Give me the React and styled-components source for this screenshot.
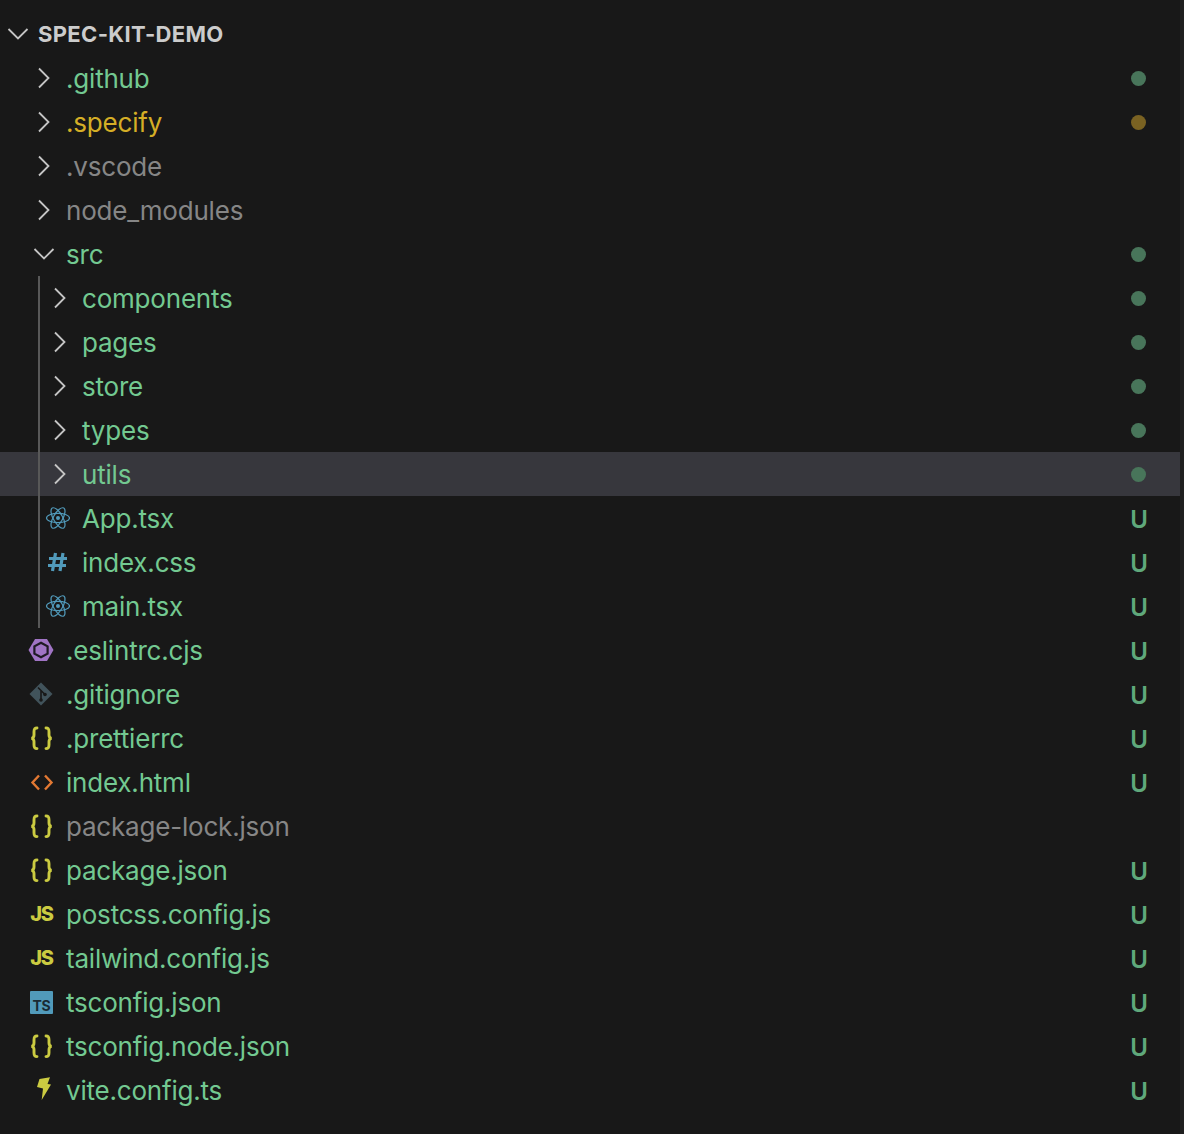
import React from "react";
import styled, { createGlobalStyle } from "styled-components";

const GREEN = "#73c991";
const YELLOW = "#d5ae26";
const GRAY = "#868686";

const GlobalStyle = createGlobalStyle`
  html, body {
    margin: 0;
    padding: 0;
    background: #181818;
  }
  body {
    font-family: Inter, "Liberation Sans", sans-serif;
  }
`;

const Explorer = styled.div`
  display: flex;
  width: 1184px;
  height: 1134px;
  overflow: hidden;
  background: #181818;
`;

const Tree = styled.div`
  flex: 1;
  padding-top: 12px;
`;

const Scrollbar = styled.div`
  width: 4px;
  background: #1f1f1f;
`;

const Header = styled.div`
  display: flex;
  align-items: center;
  height: 44px;
  font-size: 22px;
  font-weight: 700;
  letter-spacing: 0.35px;
  color: #cccccc;
`;

const HeaderChevron = styled.span`
  display: flex;
  justify-content: center;
  width: 36px;
  margin-right: 2px;
`;

const Group = styled.div`
  position: relative;

  &::before {
    content: "";
    position: absolute;
    left: 38px;
    top: 0;
    bottom: 0;
    width: 2px;
    background: #585858;
    z-index: 1;
  }
`;

const Row = styled.div`
  display: flex;
  align-items: center;
  height: 44px;
  padding-left: ${(p) => 28 + p.$depth * 16}px;
  padding-right: 26px;
  background: ${(p) => (p.$active ? "#37373d" : "transparent")};
`;

const IconSlot = styled.span`
  display: flex;
  align-items: center;
  justify-content: center;
  width: 26px;
  height: 26px;
  margin-right: 12px;
  flex: none;
`;

const ChevronSvg = styled.svg`
  flex: none;
  width: 24px;
  height: 24px;
  fill: none;
  stroke: #c5c5c5;
  stroke-width: 1.8;

  ${IconSlot} & {
    margin-left: 6px;
  }
`;

const Name = styled.span`
  padding-top: 2px;
  font-size: 26px;
  font-weight: 430;
  letter-spacing: -0.2px;
  line-height: 44px;
  color: ${(p) => p.$color};
  white-space: nowrap;
`;

const StatusSlot = styled.span`
  display: flex;
  align-items: center;
  justify-content: center;
  width: 30px;
  margin-left: auto;
`;

const Dot = styled.span`
  width: 15px;
  height: 15px;
  margin-right: 1px;
  border-radius: 50%;
  background: ${(p) => (p.$yellow ? "#7a6222" : "#48755a")};
`;

const Untracked = styled.span`
  padding-top: 3px;
  font-size: 24px;
  font-weight: 600;
  line-height: 44px;
  color: #5fa87b;
`;

const JsBadge = styled.span`
  margin-left: 1px;
  font-size: 20px;
  font-weight: 800;
  letter-spacing: -1.2px;
  line-height: 26px;
  color: #cbcb41;
`;

const TsBadge = styled.span`
  display: flex;
  align-items: flex-end;
  justify-content: flex-end;
  width: 23px;
  height: 23px;
  padding: 0 2px 1px 0;
  box-sizing: border-box;
  border-radius: 1px;
  background: #519aba;

  span {
    font-size: 14px;
    font-weight: 700;
    line-height: 14px;
    letter-spacing: -0.3px;
    color: #1a2a33;
  }
`;

const Chevron = ({ open }) => (
  <ChevronSvg viewBox="0 0 24 24">
    {open ? (
      <path d="M2.5 7 L12 16.5 L21.5 7" />
    ) : (
      <path d="M7 2.5 L16.5 12 L7 21.5" />
    )}
  </ChevronSvg>
);

const ReactIcon = () => (
  <svg width="26" height="26" viewBox="-1 0 26 26" fill="none" stroke="#519aba" strokeWidth="1.2">
    <ellipse cx="13" cy="13" rx="11.5" ry="4.6" />
    <ellipse cx="13" cy="13" rx="11.5" ry="4.6" transform="rotate(60 13 13)" />
    <ellipse cx="13" cy="13" rx="11.5" ry="4.6" transform="rotate(120 13 13)" />
    <circle cx="13" cy="13" r="2" fill="#519aba" stroke="none" />
  </svg>
);

const HashIcon = () => (
  <svg width="26" height="26" viewBox="-1 0 26 26" fill="none" stroke="#519aba" strokeWidth="3.2">
    <path d="M10.5 4 L7.5 22 M18 4 L15 22 M4 9.5 H22 M3 16.5 H21" />
  </svg>
);

const EslintIcon = () => (
  <svg width="26" height="26" viewBox="0 0 26 26">
    <path d="M7 2 H19 L25.5 13 L19 24 H7 L0.5 13 Z" fill="#a074c4" />
    <path d="M13 5.8 L19.6 9.4 V16.6 L13 20.2 L6.4 16.6 V9.4 Z" fill="#a074c4" stroke="#1f1a24" strokeWidth="2.2" />
  </svg>
);

const GitIcon = () => (
  <svg width="26" height="26" viewBox="0 0 26 26">
    <path d="M13 1.5 L24.5 13 L13 24.5 L1.5 13 Z" fill="#41535b" strokeLinejoin="round" />
    <path d="M10 6.5 L17 13.5 M13 10 V19" stroke="#181818" strokeWidth="1.6" fill="none" />
    <circle cx="13" cy="19" r="1.8" fill="#181818" />
    <circle cx="17" cy="13.5" r="1.8" fill="#181818" />
  </svg>
);

const BracesIcon = () => (
  <svg width="26" height="26" viewBox="0 0 26 26" fill="none" stroke="#cbcb41" strokeWidth="2.9" strokeLinecap="round">
    <path d="M9 3 C6.5 3 6 4.2 6 6.8 V10 C6 12 5 13 3.5 13.3 C5 13.6 6 14.5 6 16.5 V19.8 C6 22.4 6.5 23.6 9 23.6" />
    <path d="M18 3 C20.5 3 21 4.2 21 6.8 V10 C21 12 22 13 23.5 13.3 C22 13.6 21 14.5 21 16.5 V19.8 C21 22.4 20.5 23.6 18 23.6" />
  </svg>
);

const HtmlIcon = () => (
  <svg width="26" height="26" viewBox="0 0 26 26" fill="none" stroke="#e37933" strokeWidth="2.4">
    <path d="M11 6.5 L4.5 13.5 L11 20.5 M17 6.5 L23.5 13.5 L17 20.5" />
  </svg>
);

const BoltIcon = () => (
  <svg width="26" height="26" viewBox="0 0 26 26">
    <path d="M11.5 2 L22 0.3 L19.5 7 L23 7.5 L13.7 23 L15 11.5 L9 10 Z" fill="#cbcb41" />
  </svg>
);

const ICONS = {
  react: <ReactIcon />,
  hash: <HashIcon />,
  eslint: <EslintIcon />,
  git: <GitIcon />,
  json: <BracesIcon />,
  html: <HtmlIcon />,
  js: <JsBadge>JS</JsBadge>,
  ts: (
    <TsBadge>
      <span>TS</span>
    </TsBadge>
  ),
  vite: <BoltIcon />,
};

const folders = [
  { name: ".github", color: GREEN, status: "dot" },
  { name: ".specify", color: YELLOW, status: "dotYellow" },
  { name: ".vscode", color: GRAY },
  { name: "node_modules", color: GRAY },
];

const srcFolders = ["components", "pages", "store", "types", "utils"];
const srcFiles = [
  { name: "App.tsx", icon: "react" },
  { name: "index.css", icon: "hash" },
  { name: "main.tsx", icon: "react" },
];

const rootFiles = [
  { name: ".eslintrc.cjs", icon: "eslint" },
  { name: ".gitignore", icon: "git" },
  { name: ".prettierrc", icon: "json" },
  { name: "index.html", icon: "html" },
  { name: "package-lock.json", icon: "json", ignored: true },
  { name: "package.json", icon: "json" },
  { name: "postcss.config.js", icon: "js" },
  { name: "tailwind.config.js", icon: "js" },
  { name: "tsconfig.json", icon: "ts" },
  { name: "tsconfig.node.json", icon: "json" },
  { name: "vite.config.ts", icon: "vite" },
];

function Status({ kind }) {
  if (kind === "U") return <StatusSlot><Untracked>U</Untracked></StatusSlot>;
  if (kind === "dot") return <StatusSlot><Dot /></StatusSlot>;
  if (kind === "dotYellow") return <StatusSlot><Dot $yellow /></StatusSlot>;
  return <StatusSlot />;
}

function FolderRow({ name, color = GREEN, status, depth = 0, open, active }) {
  return (
    <Row $depth={depth} $active={active}>
      <IconSlot><Chevron open={open} /></IconSlot>
      <Name $color={color}>{name}</Name>
      <Status kind={status} />
    </Row>
  );
}

function FileRow({ name, icon, depth = 0, ignored }) {
  return (
    <Row $depth={depth}>
      <IconSlot>{ICONS[icon]}</IconSlot>
      <Name $color={ignored ? GRAY : GREEN}>{name}</Name>
      <Status kind={ignored ? null : "U"} />
    </Row>
  );
}

export default function App() {
  return (
    <Explorer>
      <GlobalStyle />
      <Tree>
        <Header>
          <HeaderChevron><Chevron open /></HeaderChevron>
          SPEC-KIT-DEMO
        </Header>
        {folders.map((f) => (
          <FolderRow key={f.name} name={f.name} color={f.color} status={f.status} />
        ))}
        <FolderRow name="src" status="dot" open />
        <Group>
          {srcFolders.map((name) => (
            <FolderRow key={name} name={name} status="dot" depth={1} active={name === "utils"} />
          ))}
          {srcFiles.map((f) => (
            <FileRow key={f.name} name={f.name} icon={f.icon} depth={1} />
          ))}
        </Group>
        {rootFiles.map((f) => (
          <FileRow key={f.name} name={f.name} icon={f.icon} ignored={f.ignored} />
        ))}
      </Tree>
      <Scrollbar />
    </Explorer>
  );
}
